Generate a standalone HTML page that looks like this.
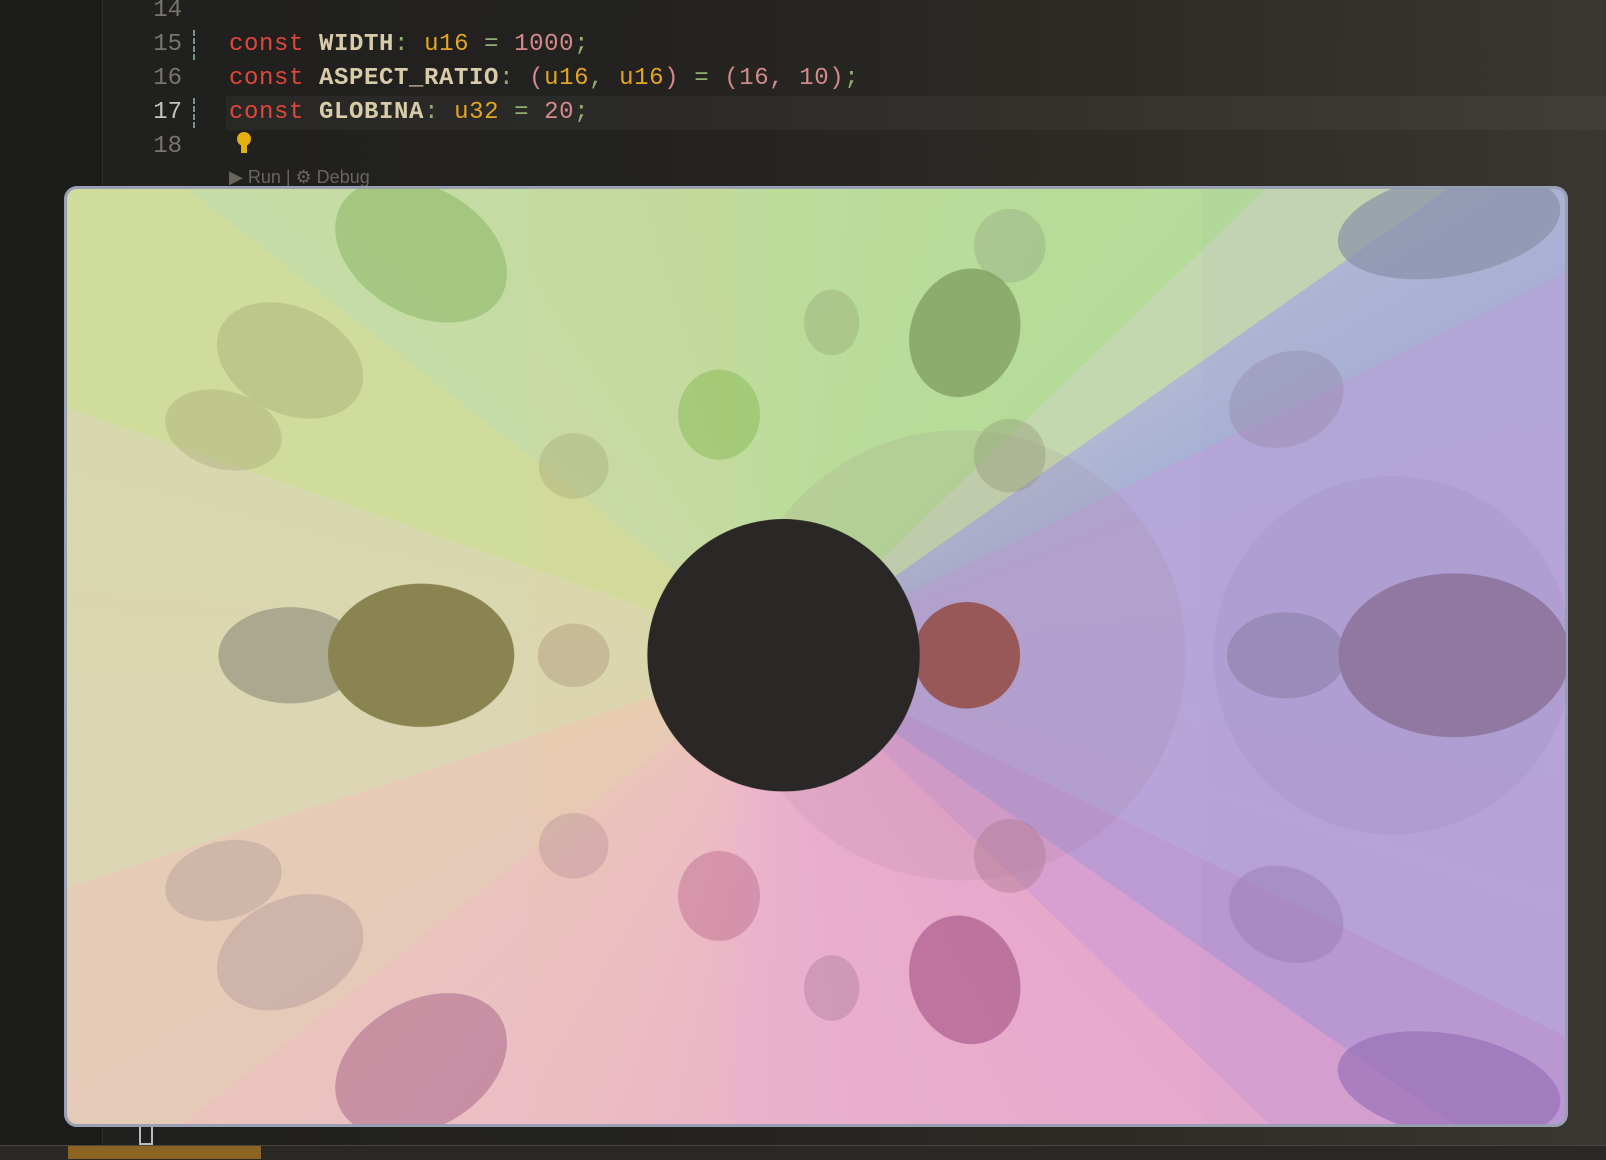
<!DOCTYPE html>
<html><head><meta charset="utf-8"><style>
html,body{margin:0;padding:0;}
body{width:1606px;height:1159px;overflow:hidden;position:relative;background:linear-gradient(90deg,#1f1f1d 0,#232220 40%,#2e2b26 70%,#3a3630 100%);font-family:"Liberation Mono",monospace;}
.gut{position:absolute;left:0;top:0;width:102px;height:1159px;background:#1c1c1b;border-right:1px solid #2e2d2a;}
.ln{position:absolute;left:120px;width:62px;text-align:right;font-size:24px;color:#7a756c;}
.code{position:absolute;left:229px;font-size:24px;white-space:pre;color:#d6ccb0;letter-spacing:0.6px;}
.k{color:#e0463a}.t{color:#e3a522}.n{color:#d48a8a}.c{color:#d8cba8;font-weight:bold}.o{color:#8fb070}
.hl{position:absolute;left:226px;top:96px;width:1380px;height:34px;background:rgba(255,255,255,0.04);}
.win{position:absolute;left:64px;top:186px;width:1498px;height:935px;border:3px solid #9aa0b4;border-radius:13px;overflow:hidden;
background:conic-gradient(from 0deg at 47.8% 49.8%,#bcdc9a 0deg,#b4dc98 46deg,#c4d8b0 46deg,#c4d8b0 55deg,#b0b8d4 55deg,#aab2d4 64deg,#b4a8d8 64deg,#b8a4d8 116deg,#bc9ad2 116deg,#bc9ad2 125deg,#d8a0d0 125deg,#d8a0d0 134deg,#e8a8cc 134deg,#eab0cc 180deg,#ecbcc8 205deg,#eac4bc 232deg,#e6cab8 232deg,#e6ccb6 252deg,#dcd6b4 252deg,#d8d8ae 289deg,#cfdc9c 289deg,#cfdc9c 308deg,#c6dca6 308deg,#c2dca0 340deg,#bcdc9a 360deg);}
.status{position:absolute;left:0;top:1145px;width:1606px;height:14px;background:#2a2825;border-top:1px solid #4a463e;}
</style></head><body>
<div class="gut"></div>
<div class="hl"></div>
<div class="ln" style="top:-3px">14</div>
<div class="ln" style="top:31px">15</div>
<div class="ln" style="top:65px">16</div>
<div class="ln" style="top:99px;color:#c8c4bc">17</div>
<div class="ln" style="top:133px">18</div>
<div style="position:absolute;left:193px;top:30px;width:3px;height:30px;border-left:2px dashed #6a9a8a"></div>
<div style="position:absolute;left:193px;top:98px;width:3px;height:30px;border-left:2px dashed #6a9a8a"></div>
<div class="code" style="top:31px"><span class="k">const</span> <span class="c">WIDTH</span><span class="o">:</span> <span class="t">u16</span> <span class="o">=</span> <span class="n">1000</span><span class="o">;</span></div>
<div class="code" style="top:65px"><span class="k">const</span> <span class="c">ASPECT_RATIO</span><span class="o">:</span> <span class="n">(</span><span class="t">u16</span><span class="o">,</span> <span class="t">u16</span><span class="n">)</span> <span class="o">=</span> <span class="n">(16, 10)</span><span class="o">;</span></div>
<div class="code" style="top:99px"><span class="k">const</span> <span class="c">GLOBINA</span><span class="o">:</span> <span class="t">u32</span> <span class="o">=</span> <span class="n">20</span><span class="o">;</span></div>
<svg style="position:absolute;left:236px;top:131px" width="16" height="24"><circle cx="8" cy="8" r="7" fill="#e3b010"/><rect x="5" y="14" width="6" height="8" fill="#e3b010"/></svg>
<div style="position:absolute;left:229px;top:167px;font-family:'Liberation Sans',sans-serif;font-size:18px;color:#6a665e">▶ Run | ⚙ Debug</div>
<div class="win"></div>
<svg style="position:absolute;left:0;top:0" width="1606" height="1159" viewBox="0 0 1568 1132">
<defs><clipPath id="cp"><rect x="65" y="184" width="1464" height="914" rx="12"/></clipPath></defs>
<g clip-path="url(#cp)">
<rect x="517" y="184" width="200" height="914" fill="#f0c890" opacity="0.08"/>
<rect x="1173" y="184" width="360" height="914" fill="#a090d0" opacity="0.06"/>
<circle cx="938" cy="640" r="220" fill="#a07080" opacity="0.12"/>
<circle cx="1360" cy="640" r="175" fill="#8070a0" opacity="0.1"/>
<g opacity="0.35">
<ellipse cx="411" cy="245" rx="90" ry="62" transform="rotate(30 411 245)" fill="#6aa040"/>
<ellipse cx="283" cy="352" rx="75" ry="52" transform="rotate(25 283 352)" fill="#9aa070"/>
<ellipse cx="283" cy="930" rx="75" ry="52" transform="rotate(-25 283 930)" fill="#a08a90"/>
<ellipse cx="218" cy="420" rx="58" ry="38" transform="rotate(15 218 420)" fill="#a0a070"/>
<ellipse cx="218" cy="860" rx="58" ry="38" transform="rotate(-15 218 860)" fill="#a09090"/>
<ellipse cx="560" cy="455" rx="34" ry="32" fill="#a0a070"/>
<ellipse cx="560" cy="826" rx="34" ry="32" fill="#b08a90"/>
<ellipse cx="560" cy="640" rx="35" ry="31" fill="#a08870"/>
<ellipse cx="986" cy="445" rx="35" ry="36" fill="#8a9070"/>
<ellipse cx="986" cy="836" rx="35" ry="36" fill="#a07080"/>
<ellipse cx="986" cy="240" rx="35" ry="36" fill="#90a080"/>
<ellipse cx="1256" cy="390" rx="58" ry="45" transform="rotate(-25 1256 390)" fill="#9080a0"/>
<ellipse cx="1256" cy="893" rx="58" ry="45" transform="rotate(25 1256 893)" fill="#9070a0"/>
<ellipse cx="812" cy="315" rx="27" ry="32" fill="#90a070"/>
<ellipse cx="812" cy="965" rx="27" ry="32" fill="#a07090"/>
</g>
<ellipse cx="942" cy="325" rx="53" ry="64" transform="rotate(20 942 325)" fill="#80a060" opacity="0.8"/>
<ellipse cx="942" cy="957" rx="53" ry="64" transform="rotate(-20 942 957)" fill="#b06090" opacity="0.75"/>
<ellipse cx="702" cy="405" rx="40" ry="44" fill="#90c060" opacity="0.6"/>
<ellipse cx="702" cy="875" rx="40" ry="44" fill="#c07090" opacity="0.5"/>
<ellipse cx="411" cy="1040" rx="90" ry="62" transform="rotate(-30 411 1040)" fill="#b07090" opacity="0.6"/>
<ellipse cx="1415" cy="220" rx="110" ry="50" transform="rotate(-10 1415 220)" fill="#8890a8" opacity="0.7"/>
<ellipse cx="1415" cy="1060" rx="110" ry="50" transform="rotate(10 1415 1060)" fill="#9870b8" opacity="0.7"/>
<ellipse cx="283" cy="640" rx="70" ry="47" fill="#8a8878" opacity="0.6"/>
<ellipse cx="1256" cy="640" rx="58" ry="42" fill="#8a80a8" opacity="0.6"/>
<ellipse cx="411" cy="640" rx="91" ry="70" fill="#8a8450"/>
<ellipse cx="1420" cy="640" rx="113" ry="80" fill="#9078a0"/>
<circle cx="944" cy="640" r="52" fill="#985858"/>
<circle cx="765" cy="640" r="133" fill="#2a2826"/>
</g>
</svg>
<div style="position:absolute;left:139px;top:1127px;width:10px;height:16px;border:2px solid #bbb;border-top:none"></div>
<div class="status"></div>
<div style="position:absolute;left:68px;top:1146px;width:193px;height:13px;background:#8a6420"></div>
</body></html>
